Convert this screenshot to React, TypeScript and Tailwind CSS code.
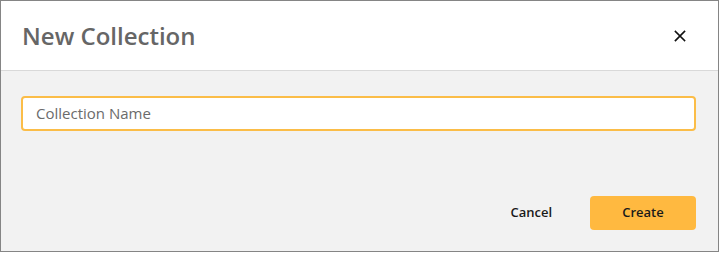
export default function App() {
  return (
    <div className="w-[720px] h-[253px] bg-white" style={{ fontFamily: '"Open Sans", sans-serif' }}>
      <div className="w-[719px] h-[252px] border border-[#858585] flex flex-col">
        <div className="h-[70px] bg-white border-b border-[#d9d9d9] flex items-center justify-between pl-[21px] pr-[32px]">
          <h1 className="text-[24px] font-semibold text-[#666666] leading-none">New Collection</h1>
          <button className="text-[#111111]" aria-label="Close">
            <svg width="12" height="12" viewBox="0 0 12 12">
              <path d="M1.5 1.5 L10.5 10.5 M10.5 1.5 L1.5 10.5" stroke="currentColor" strokeWidth="1.7" strokeLinecap="square" />
            </svg>
          </button>
        </div>
        <div className="flex-1 bg-[#f2f2f2] flex flex-col pl-[20px] pr-[22px] pt-[25px] pb-[21px]">
          <input
            placeholder="Collection Name"
            className="h-[35px] w-full rounded-[4px] border-2 border-[#fbbd48] bg-white px-[13px] pb-[1px] text-[15px] text-[#333] placeholder:text-[#6b6b6b] outline-none"
          />
          <div className="mt-auto flex items-center justify-end gap-[38px]">
            <button className="text-[13px] font-semibold text-[#1a1a1a]">Cancel</button>
            <button className="h-[34px] w-[106px] rounded-[4px] bg-[#ffb940] text-[13px] font-semibold text-[#1a1a1a]">Create</button>
          </div>
        </div>
      </div>
    </div>
  );
}
